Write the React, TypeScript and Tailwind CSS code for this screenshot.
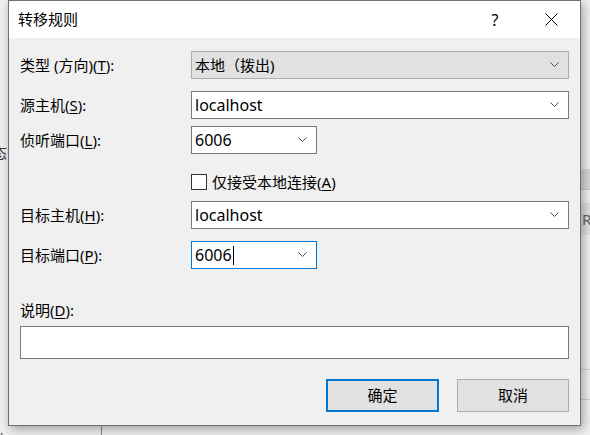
import React from 'react';

const Chevron: React.FC = () => (
  <svg width="9" height="6" viewBox="0 0 9 6" className="shrink-0">
    <polyline points="0.5,0.5 4.5,4.5 8.5,0.5" fill="none" stroke="#4d4d4d" strokeWidth="1" />
  </svg>
);

const Label: React.FC<{ text: string; keyChar: string; colon?: boolean }> = ({ text, keyChar, colon = true }) => (
  <span className="whitespace-nowrap">
    {text}(<span className="underline underline-offset-2">{keyChar}</span>){colon ? ':' : ''}
  </span>
);

interface ComboProps {
  value: string;
  width: string;
  readOnly?: boolean;
  focused?: boolean;
  latin?: boolean;
}

const Combo: React.FC<ComboProps> = ({ value, width, readOnly, focused, latin }) => {
  const box = readOnly
    ? 'bg-[#e1e1e1] border-[#adadad]'
    : focused
      ? 'bg-white border-[#0078d7]'
      : 'bg-white border-[#7a7a7a]';
  return (
    <div className={`${width} h-[28px] border ${box} flex items-center pl-[3px] pr-[9px]`}>
      <span className={`flex-1 flex items-center leading-none ${latin ? 'text-[16px]' : 'text-[15px]'}`}>
        {value}
        {focused && <span className="inline-block w-px h-[19px] bg-black ml-px" />}
      </span>
      <Chevron />
    </div>
  );
};

const Row: React.FC<{ label: React.ReactNode; children: React.ReactNode; className: string }> = ({ label, children, className }) => (
  <div className={`flex items-center ${className}`}>
    <div className="w-[171px] leading-none">{label}</div>
    {children}
  </div>
);

export default function App() {
  return (
    <div className="relative w-[590px] h-[435px] overflow-hidden bg-[#f0f0f0] text-black text-[15px] font-['Noto_Sans','Noto_Sans_CJK_SC',sans-serif]">
      {/* window behind the dialog */}
      <div className="absolute left-0 top-[142px] text-[15px] text-[#333] -ml-[8px]">态</div>
      <div className="absolute left-[580px] top-[169px] w-[10px] h-[21px] bg-[#d9d9d9] border-b border-[#c8c8c8]" />
      <div className="absolute left-[580px] top-[203px] w-[10px] h-[32px] bg-[#e0e0e0] text-[#666] leading-[32px] pl-[2px] overflow-hidden">R)</div>
      <div className="absolute left-[580px] top-[369px] w-[10px] h-px bg-[#d0d0d0]" />
      <div className="absolute left-[580px] top-[399px] w-[10px] h-px bg-[#d0d0d0]" />
      <div className="absolute left-[101px] top-[426px] w-px h-[9px] bg-[#8a8a8a]" />
      <div className="absolute left-0 top-[430px] text-[12px] text-[#333] leading-none">:</div>

      {/* dialog */}
      <div className="absolute left-[8px] top-0 w-[573px] h-[426px] border border-[#707070] bg-[#f0f0f0] shadow-[2px_3px_10px_rgba(0,0,0,0.35)] flex flex-col">
        <div className="h-[37px] bg-white flex items-center shrink-0">
          <span className="pl-[9px] flex-1 leading-none">转移规则</span>
          <div className="w-[58px] h-full flex items-center justify-center text-[16px] pl-[4px]">?</div>
          <div className="w-[58px] h-full flex items-center justify-center">
            <svg width="13" height="13" viewBox="0 0 13 13">
              <path d="M0.5 0.5 L12.5 12.5 M12.5 0.5 L0.5 12.5" stroke="#000" strokeWidth="1" />
            </svg>
          </div>
        </div>

        <div className="px-[11px] flex flex-col">
          <Row className="mt-[13px]" label={<Label text="类型 (方向)" keyChar="T" />}>
            <Combo value="本地（拨出)" width="w-[378px]" readOnly />
          </Row>
          <Row className="mt-[12px]" label={<Label text="源主机" keyChar="S" />}>
            <Combo value="localhost" width="w-[378px]" latin />
          </Row>
          <Row className="mt-[7px]" label={<Label text="侦听端口" keyChar="L" />}>
            <Combo value="6006" width="w-[126px]" latin />
          </Row>

          <div className="mt-[20px] ml-[171px] flex items-center h-[16px]">
            <div className="w-[16px] h-[16px] border border-[#333] bg-white" />
            <span className="ml-[5px] leading-none">
              <Label text="仅接受本地连接" keyChar="A" colon={false} />
            </span>
          </div>

          <Row className="mt-[11px]" label={<Label text="目标主机" keyChar="H" />}>
            <Combo value="localhost" width="w-[378px]" latin />
          </Row>
          <Row className="mt-[12px]" label={<Label text="目标端口" keyChar="P" />}>
            <Combo value="6006" width="w-[126px]" focused latin />
          </Row>

          <div className="mt-[31px] h-[20px] flex items-center leading-none">
            <Label text="说明" keyChar="D" />
          </div>
          <div className="mt-[6px] h-[33px] border border-[#7a7a7a] bg-white" />

          <div className="mt-[20px] flex justify-end gap-[18px]">
            <button className="w-[113px] h-[33px] border-2 border-[#0078d7] bg-[#e1e1e1] leading-none">确定</button>
            <button className="w-[112px] h-[33px] border border-[#adadad] bg-[#e1e1e1] leading-none">取消</button>
          </div>
        </div>
      </div>
    </div>
  );
}
